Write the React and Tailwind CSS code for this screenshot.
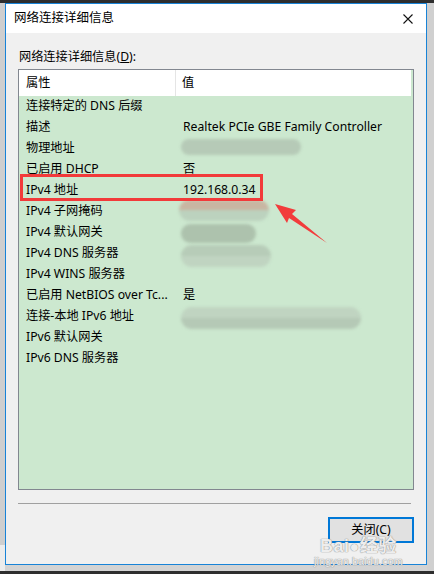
const rows = [
  { name: "连接特定的 DNS 后缀", value: "" },
  { name: "描述", value: "Realtek PCIe GBE Family Controller" },
  { name: "物理地址", blob: "mac" },
  { name: "已启用 DHCP", value: "否" },
  { name: "IPv4 地址", value: "192.168.0.34" },
  { name: "IPv4 子网掩码", blob: "mask" },
  { name: "IPv4 默认网关", blob: "gw" },
  { name: "IPv4 DNS 服务器", blob: "dns" },
  { name: "IPv4 WINS 服务器", value: "" },
  { name: "已启用 NetBIOS over Tc...", value: "是" },
  { name: "连接-本地 IPv6 地址", blob: "v6" },
  { name: "IPv6 默认网关", value: "" },
  { name: "IPv6 DNS 服务器", value: "" }
]

// blurred-out values from the screenshot
function Blob({ kind }) {
  if (kind === "mac") {
    return <div className="absolute left-[-2px] top-[-1px] h-[16px] w-[120px] rounded-full bg-[#b6cab7] blur-[1.5px]" />
  }
  if (kind === "mask") {
    return (
      <div className="absolute left-[-4px] top-[-3px] w-[90px] blur-[1.5px]">
        <div className="h-[10px] rounded-t-full bg-[#c8b6a2]" />
        <div className="h-[11px] rounded-b-full bg-[#bcd2be]" />
      </div>
    )
  }
  if (kind === "gw") {
    return <div className="absolute left-[-2px] top-[0px] h-[19px] w-[75px] rounded-full bg-[#adc2ad] blur-[1.5px]" />
  }
  if (kind === "dns") {
    return (
      <div className="absolute left-[-2px] top-[0px] w-[90px] blur-[1.5px]">
        <div className="h-[11px] w-[90px] rounded-t-full bg-[#b7ccb8]" />
        <div className="h-[11px] w-[90px] rounded-b-full bg-[#c0d4c1]" />
      </div>
    )
  }
  return (
    <div className="absolute left-[-2px] top-[-1px] w-[180px] blur-[1.5px]">
      <div className="h-[11px] rounded-t-full bg-[#c0d4c1]" />
      <div className="h-[11px] rounded-b-full bg-[#b5c9b6]" />
    </div>
  )
}

function Row({ row }) {
  return (
    <div className="flex h-[21px] items-center">
      <div className="w-[157px] shrink-0 truncate pl-[7px]">{row.name}</div>
      <div className="relative h-full flex-1 pl-[7px]">
        {row.blob ? (
          <div className="relative mt-[2px] h-[16px]">
            <Blob kind={row.blob} />
          </div>
        ) : (
          <div className="flex h-full items-center">{row.value}</div>
        )}
      </div>
    </div>
  )
}

export default function App() {
  return (
    <div
      className="relative flex h-[574px] w-[434px] flex-col overflow-hidden bg-[#2e2e2e] text-[12.2px] text-black"
      style={{ fontFamily: '"Noto Sans", "Noto Sans CJK SC", sans-serif' }}
    >
      <div className="mt-[3px] flex h-[568px] bg-[#d3d3d3]">
        <div className="flex w-[5px] flex-col">
          <div className="h-[542px] bg-[#cfcfcf]" />
          <div className="flex-1 bg-[#ececec]" />
        </div>
        <div className="flex h-[562px] w-[422px] flex-col border border-[#1883d7] bg-[#f0f0f0]">
          <div className="flex h-[29px] items-center justify-between bg-white pl-[8px] pr-[12px]">
            <span className="text-[12.5px]">网络连接详细信息</span>
            <svg width="10" height="10" viewBox="0 0 10 10" className="mr-[1px]">
              <path d="M0.5 0.5 L9.5 9.5 M9.5 0.5 L0.5 9.5" stroke="#111" strokeWidth="1.1" />
            </svg>
          </div>
          <div className="flex flex-1 flex-col px-[12px]">
            <div className="mt-[16px] h-[16px] pl-[1px] leading-[16px]">
              网络连接详细信息(<span className="underline">D</span>):
            </div>
            <div className="mt-[4px] flex h-[421px] flex-col border border-[#828790] bg-[#cce8cf]">
              <div className="mr-[2px] flex h-[26px] shrink-0 bg-white">
                <div className="flex w-[157px] items-center border-r border-[#e5e5e5] pl-[7px]">属性</div>
                <div className="flex flex-1 items-center pl-[6px]">值</div>
              </div>
              {rows.map((row) => (
                <Row key={row.name} row={row} />
              ))}
            </div>
            <div className="mr-[3px] mt-[13px] h-[1px] bg-[#a0a0a0]" />
            <div className="mt-[13px] flex justify-end">
              <button className="flex h-[26px] w-[86px] items-center justify-center border-2 border-[#0078d7] bg-[#e1e1e1]">
                关闭(C)
              </button>
            </div>
          </div>
        </div>
        <div className="flex-1 bg-[#d0d0d0]" />
      </div>

      <div className="absolute left-[20px] top-[174px] h-[27px] w-[243px] border-[3px] border-[#f23a3a]" />
      <svg className="absolute left-0 top-0" width="434" height="574" viewBox="0 0 434 574">
        <polygon
          points="275,204 296,210 292,214 327,243 289,218 287,223"
          fill="#f23c3c"
        />
      </svg>

      <div
        className="absolute left-[314px] top-[538px] flex flex-col items-center text-white/85 [text-shadow:0_0_1px_#8a8a8a,0_0_1px_#8a8a8a]"
        style={{ fontFamily: '"Liberation Sans", "Noto Sans CJK SC", sans-serif' }}
      >
        <div className="text-[18px] font-bold leading-[17px] tracking-[0.5px]">Bai<span className="text-[16px]">●</span>经验</div>
        <div className="text-[11px] leading-[12px]">jingyan.baidu.com</div>
      </div>
    </div>
  )
}
